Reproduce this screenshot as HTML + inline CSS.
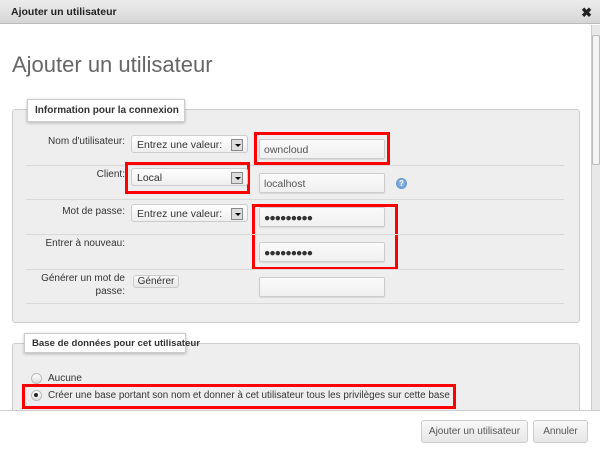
<!DOCTYPE html>
<html><head><meta charset="utf-8"><style>
*{box-sizing:border-box;margin:0;padding:0}
body{width:600px;height:452px;overflow:hidden;background:#fff;font-family:"Liberation Sans",sans-serif;font-size:10px;color:#333;position:relative}
.a{position:absolute;white-space:nowrap}
.title{left:0;top:0;width:600px;height:24px;background:linear-gradient(#ececec,#d6d6d6);border-bottom:1px solid #bbb;font-weight:bold;font-size:10.5px;padding:6px 0 0 11px;color:#222}
.fs{background:#eee;border:1px solid #ccc;border-radius:3px}
.leg{background:#fff;border:1px solid #ccc;box-shadow:0 1px 3px rgba(0,0,0,.25);font-weight:bold;color:#333;font-size:10px;padding:5px 0 0 7px}
.lbl{text-align:right;width:110px;left:15px;line-height:13px}
.sel{width:117px;height:18px;border:1px solid #ccc;border-radius:3px;background:linear-gradient(#fff,#eee);padding:3px 0 0 5px;font-size:10.5px}
.sel:after{content:"";position:absolute;right:4px;top:3px;width:10px;height:10px;border:1px solid #888;background:#ddd}
.sel i{position:absolute;right:6px;top:8px;width:0;height:0;border-left:3px solid transparent;border-right:3px solid transparent;border-top:3px solid #000;z-index:2}
.inp{width:126px;height:20px;border:1px solid #ccc;border-radius:2px;background:linear-gradient(#fafafa,#f0f0f0);padding:4px 0 0 4px;color:#555;font-size:10.5px;box-shadow:0 1px 1px rgba(0,0,0,.1)}
.sep{left:26px;width:538px;height:1px;background:#d8d8d8}
.red{border:3px solid #f00}
.btn{border:1px solid #ccc;border-radius:3px;background:linear-gradient(#f8f8f8,#e6e6e6);color:#555;text-align:center;font-size:10px}
.radio{width:11px;height:11px;border-radius:50%;border:1px solid #bbb;background:linear-gradient(#fff,#ddd)}
</style></head><body>
<div class="a title">Ajouter un utilisateur</div>
<div class="a" style="right:8px;top:5px;font-size:13px;font-weight:bold;color:#222">✖</div>
<div class="a" style="left:591px;top:25px;width:9px;height:385px;background:#e8e8e8;border-left:1px solid #ccc"></div>
<div class="a" style="left:592px;top:35px;width:8px;height:130px;background:#f4f4f4;border:1px solid #bbb;border-radius:2px"></div>
<div class="a" style="left:12px;top:52px;font-size:22px;color:#666">Ajouter un utilisateur</div>

<div class="a fs" style="left:12px;top:109px;width:568px;height:214px"></div>
<div class="a leg" style="left:27px;top:99px;width:158px;height:23px">Information pour la connexion</div>

<div class="a lbl" style="top:135px">Nom d'utilisateur:</div>
<div class="a sel" style="left:131px;top:135px">Entrez une valeur:<i></i></div>
<div class="a red" style="left:254px;top:132px;width:136px;height:33px"></div>
<div class="a inp" style="left:259px;top:139px">owncloud</div>
<div class="a sep" style="top:165px"></div>

<div class="a lbl" style="top:168px">Client:</div>
<div class="a red" style="left:125px;top:162px;width:125px;height:32px"></div>
<div class="a sel" style="left:131px;top:168px">Local<i></i></div>
<div class="a inp" style="left:259px;top:173px">localhost</div>
<div class="a" style="left:396px;top:178px;width:11px;height:11px;border-radius:50%;background:radial-gradient(#9cc3ea,#4d84c4);color:#fff;font-size:8px;text-align:center;line-height:11px;font-weight:bold">?</div>
<div class="a sep" style="top:199px"></div>

<div class="a lbl" style="top:205px">Mot de passe:</div>
<div class="a sel" style="left:131px;top:204px">Entrez une valeur:<i></i></div>
<div class="a red" style="left:252px;top:204px;width:146px;height:66px"></div>
<div class="a inp" style="left:259px;top:207px;color:#333;letter-spacing:-1px">●●●●●●●●●</div>
<div class="a sep" style="top:234px"></div>
<div class="a lbl" style="top:237px">Entrer à nouveau:</div>
<div class="a inp" style="left:259px;top:242px;color:#333;letter-spacing:-1px">●●●●●●●●●</div>
<div class="a sep" style="top:269px"></div>

<div class="a lbl" style="top:272px">Générer un mot de<br>passe:</div>
<div class="a btn" style="left:133px;top:275px;width:46px;height:13px;line-height:11px;color:#333">Générer</div>
<div class="a inp" style="left:259px;top:277px"></div>
<div class="a sep" style="top:303px"></div>

<div class="a fs" style="left:12px;top:343px;width:568px;height:80px"></div>
<div class="a leg" style="left:24px;top:333px;width:162px;height:20px;padding-top:4px;font-size:9.6px">Base de données pour cet utilisateur</div>
<div class="a radio" style="left:31px;top:373px"></div>
<div class="a" style="left:48px;top:373px">Aucune</div>
<div class="a red" style="left:22px;top:384px;width:434px;height:25px"></div>
<div class="a radio" style="left:31px;top:390px"></div>
<div class="a" style="left:34px;top:393px;width:4px;height:4px;border-radius:50%;background:#222"></div>
<div class="a" style="left:48px;top:390px;font-size:9.9px">Créer une base portant son nom et donner à cet utilisateur tous les privilèges sur cette base</div>

<div class="a" style="left:0;top:410px;width:600px;height:42px;background:#fff;border-top:1px solid #ccc"></div>
<div class="a btn" style="left:421px;top:420px;width:107px;height:23px;line-height:21px">Ajouter un utilisateur</div>
<div class="a btn" style="left:533px;top:420px;width:55px;height:23px;line-height:21px">Annuler</div>
</body></html>
